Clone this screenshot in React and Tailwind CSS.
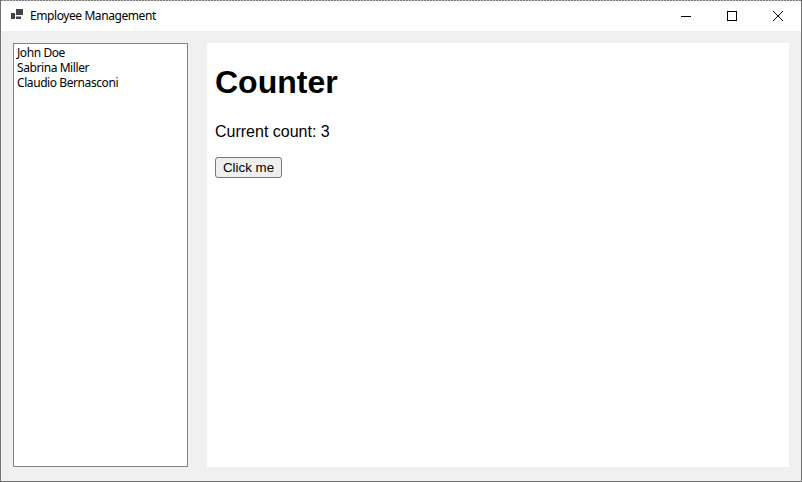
import React from "react";

export default function App() {
  return (
    <div className="w-[802px] h-[482px] border border-[#737373] border-t-0 flex flex-col bg-[#f0f0f0] overflow-hidden">
      <div className="h-px bg-[repeating-linear-gradient(90deg,#7a7a7a_0,#7a7a7a_2px,#c8c8c8_2px,#c8c8c8_3px)]" />
      <div className="h-[30px] bg-white flex items-center shrink-0">
        <svg width="12" height="10" viewBox="0 0 12 10" className="ml-[10px] mt-[-4px] shrink-0" fill="#444444">
          <rect x="0" y="4" width="4" height="6" />
          <rect x="5" y="0" width="7" height="6" />
          <rect x="5" y="7.5" width="5" height="2.5" />
        </svg>
        <span className="ml-[7px] text-[12px] text-black font-['Noto_Sans',sans-serif] tracking-[-0.42px]">Employee Management</span>
        <div className="ml-auto flex items-center h-full">
          <div className="w-[46px] h-full flex items-center justify-center">
            <svg width="10" height="10" viewBox="0 0 10 10"><path d="M0 5.5H10" stroke="#000" strokeWidth="1" /></svg>
          </div>
          <div className="w-[46px] h-full flex items-center justify-center">
            <svg width="10" height="10" viewBox="0 0 10 10"><rect x="0.5" y="0.5" width="9" height="9" fill="none" stroke="#000" strokeWidth="1" /></svg>
          </div>
          <div className="w-[46px] h-full flex items-center justify-center">
            <svg width="10" height="10" viewBox="0 0 10 10"><path d="M0 0L10 10M10 0L0 10" stroke="#000" strokeWidth="1" /></svg>
          </div>
        </div>
      </div>
      <div className="flex-1 flex pl-3 pr-3 pt-3 pb-[14px]">
        <ul className="w-[175px] border border-[#82828c] bg-white pl-[3px] pt-[1px] text-[12px] leading-[15px] text-black font-['Noto_Sans',sans-serif] tracking-[-0.42px]">
          <li>John Doe</li>
          <li>Sabrina Miller</li>
          <li>Claudio Bernasconi</li>
        </ul>
        <div className="ml-[19px] flex-1 bg-white px-2 font-['Liberation_Sans',sans-serif] text-black">
          <h1 className="text-[32px] leading-[38px] font-bold mt-5">Counter</h1>
          <p className="text-[16px] leading-[18px] mt-[22px]">Current count: 3</p>
          <button className="mt-4 block h-[21px] w-[67px] bg-[#efefef] border border-[#767676] rounded-[3px] text-[13.33px] leading-[18px] text-black">Click me</button>
        </div>
      </div>
    </div>
  );
}
